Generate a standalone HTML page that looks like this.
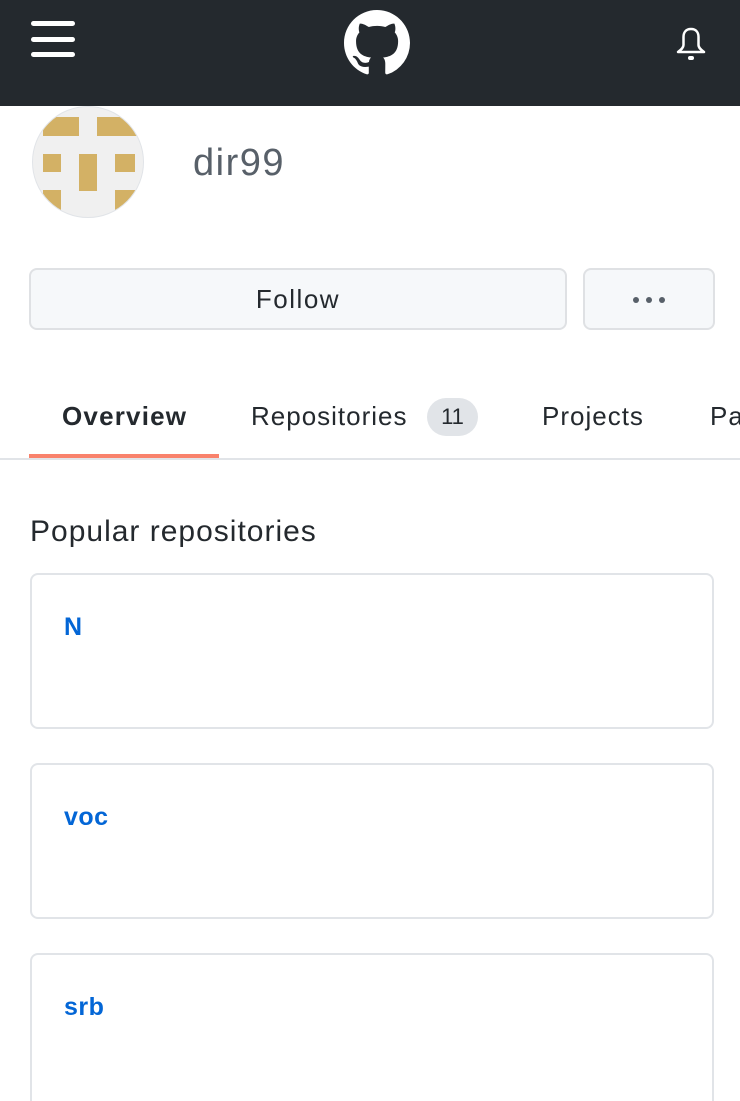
<!DOCTYPE html>
<html><head><meta charset="utf-8"><style>
html,body{margin:0;width:740px;height:1101px;overflow:hidden}
body{position:relative;background:#fff;font-family:"Liberation Sans",Helvetica,Arial,sans-serif;color:#24292e}
.hdr{position:absolute;left:0;top:0;width:740px;height:106px;background:#24292e}
.av{position:absolute;left:32px;top:106px;width:112px;height:112px;border-radius:50%;background:#f0f0f0;border:1px solid #e1e4e8;overflow:hidden;box-sizing:border-box}
.av div{position:absolute;background:#d3b165}
.name{position:absolute;left:193px;top:142px;font-size:38px;color:#586069;font-weight:300;letter-spacing:1.5px}
.btn{position:absolute;top:268px;height:62px;box-sizing:border-box;border:2px solid #dfe1e4;border-radius:8px;background:#f6f8fa;font-size:26px;text-align:center;line-height:58px}
.tab{position:absolute;top:401px;font-size:26px;letter-spacing:1px}
.card{position:absolute;left:30px;width:684px;height:156px;box-sizing:border-box;border:2px solid #e1e4e8;border-radius:8px}
.card a{position:absolute;left:32px;top:38px;color:#0366d6;font-weight:bold;font-size:25px;text-decoration:none;letter-spacing:0.5px}
.dot{position:absolute;top:27px;width:6px;height:6px;border-radius:50%;background:#586069}
</style></head><body>
<div class="hdr">
<svg style="position:absolute;left:31px;top:21px" width="44" height="38"><rect x="0" y="0" width="44" height="5" rx="2.5" fill="#fff"/><rect x="0" y="16" width="44" height="5" rx="2.5" fill="#fff"/><rect x="0" y="31" width="44" height="5" rx="2.5" fill="#fff"/></svg>
<svg style="position:absolute;left:344px;top:10px" width="66" height="66" viewBox="0 0 16 16"><path fill="#fff" d="M8 0C3.580 0 0 3.58 0 8c0 3.540 2.290 6.530 5.470 7.590.4.07.55-.17.55-.38 0-.19-.01-.82-.01-1.490-2.010.37-2.530-.49-2.690-.94-.09-.23-.48-.94-.82-1.130-.28-.15-.68-.52-.01-.53.63-.01 1.080.58 1.230.82.72 1.210 1.870.87 2.330.66.07-.52.28-.87.51-1.070-1.780-.2-3.640-.89-3.640-3.950 0-.87.31-1.590.82-2.150-.08-.2-.36-1.020.08-2.120 0 0 .67-.21 2.200.82.64-.18 1.320-.27 2-.27.68 0 1.360.09 2 .27 1.530-1.040 2.200-.82 2.200-.82.44 1.100.16 1.920.08 2.120.51.56.82 1.270.82 2.150 0 3.070-1.870 3.750-3.650 3.950.29.25.54.73.54 1.480 0 1.070-.01 1.930-.01 2.200 0 .21.15.46.55.38A8.013 8.013 0 0016 8c0-4.420-3.580-8-8-8z"/></svg>
<svg style="position:absolute;left:675px;top:27px" width="32" height="34" viewBox="0 0 32 34"><path d="M16 2c-5.500 0-7.500 4-7.500 8v8c0 3-3 5-5.500 7h26c-2.500-2-5.500-4-5.500-7v-8c0-4-2-8-7.500-8z" fill="none" stroke="#fff" stroke-width="2.5" stroke-linejoin="round"/><rect x="13" y="29" width="6" height="4" rx="2" fill="#fff"/></svg>
</div>
<div class="av">
<div style="left:10px;top:10px;width:36px;height:19px"></div>
<div style="left:64px;top:10px;width:40px;height:19px"></div>
<div style="left:10px;top:47px;width:18px;height:18px"></div>
<div style="left:46px;top:47px;width:18px;height:37px"></div>
<div style="left:82px;top:47px;width:20px;height:18px"></div>
<div style="left:10px;top:83px;width:18px;height:20px"></div>
<div style="left:82px;top:83px;width:20px;height:20px"></div>
</div>
<div class="name">dir99</div>
<div class="btn" style="left:29px;width:538px;letter-spacing:1.5px">Follow</div>
<div class="btn" style="left:583px;width:132px"><div class="dot" style="left:48px"></div><div class="dot" style="left:61px"></div><div class="dot" style="left:74px"></div></div>
<div class="tab" style="left:62px;font-weight:bold;letter-spacing:1.2px">Overview</div>
<div style="position:absolute;left:29px;top:454px;width:190px;height:4px;background:#f9826c"></div>
<div class="tab" style="left:251px">Repositories</div>
<div style="position:absolute;left:427px;top:398px;width:51px;height:38px;border-radius:19px;background:#e1e4e8;font-size:22px;text-align:center;line-height:38px">11</div>
<div class="tab" style="left:542px">Projects</div>
<div class="tab" style="left:710px">Pa</div>
<div style="position:absolute;left:0;top:458px;width:740px;height:2px;background:#e1e4e8"></div>
<div style="position:absolute;left:30px;top:515px;font-size:30px;letter-spacing:1px">Popular repositories</div>
<div class="card" style="top:573px"><a>N</a></div>
<div class="card" style="top:763px"><a>voc</a></div>
<div class="card" style="top:953px;height:148px;border-bottom:none;border-radius:8px 8px 0 0"><a>srb</a></div>
</body></html>
